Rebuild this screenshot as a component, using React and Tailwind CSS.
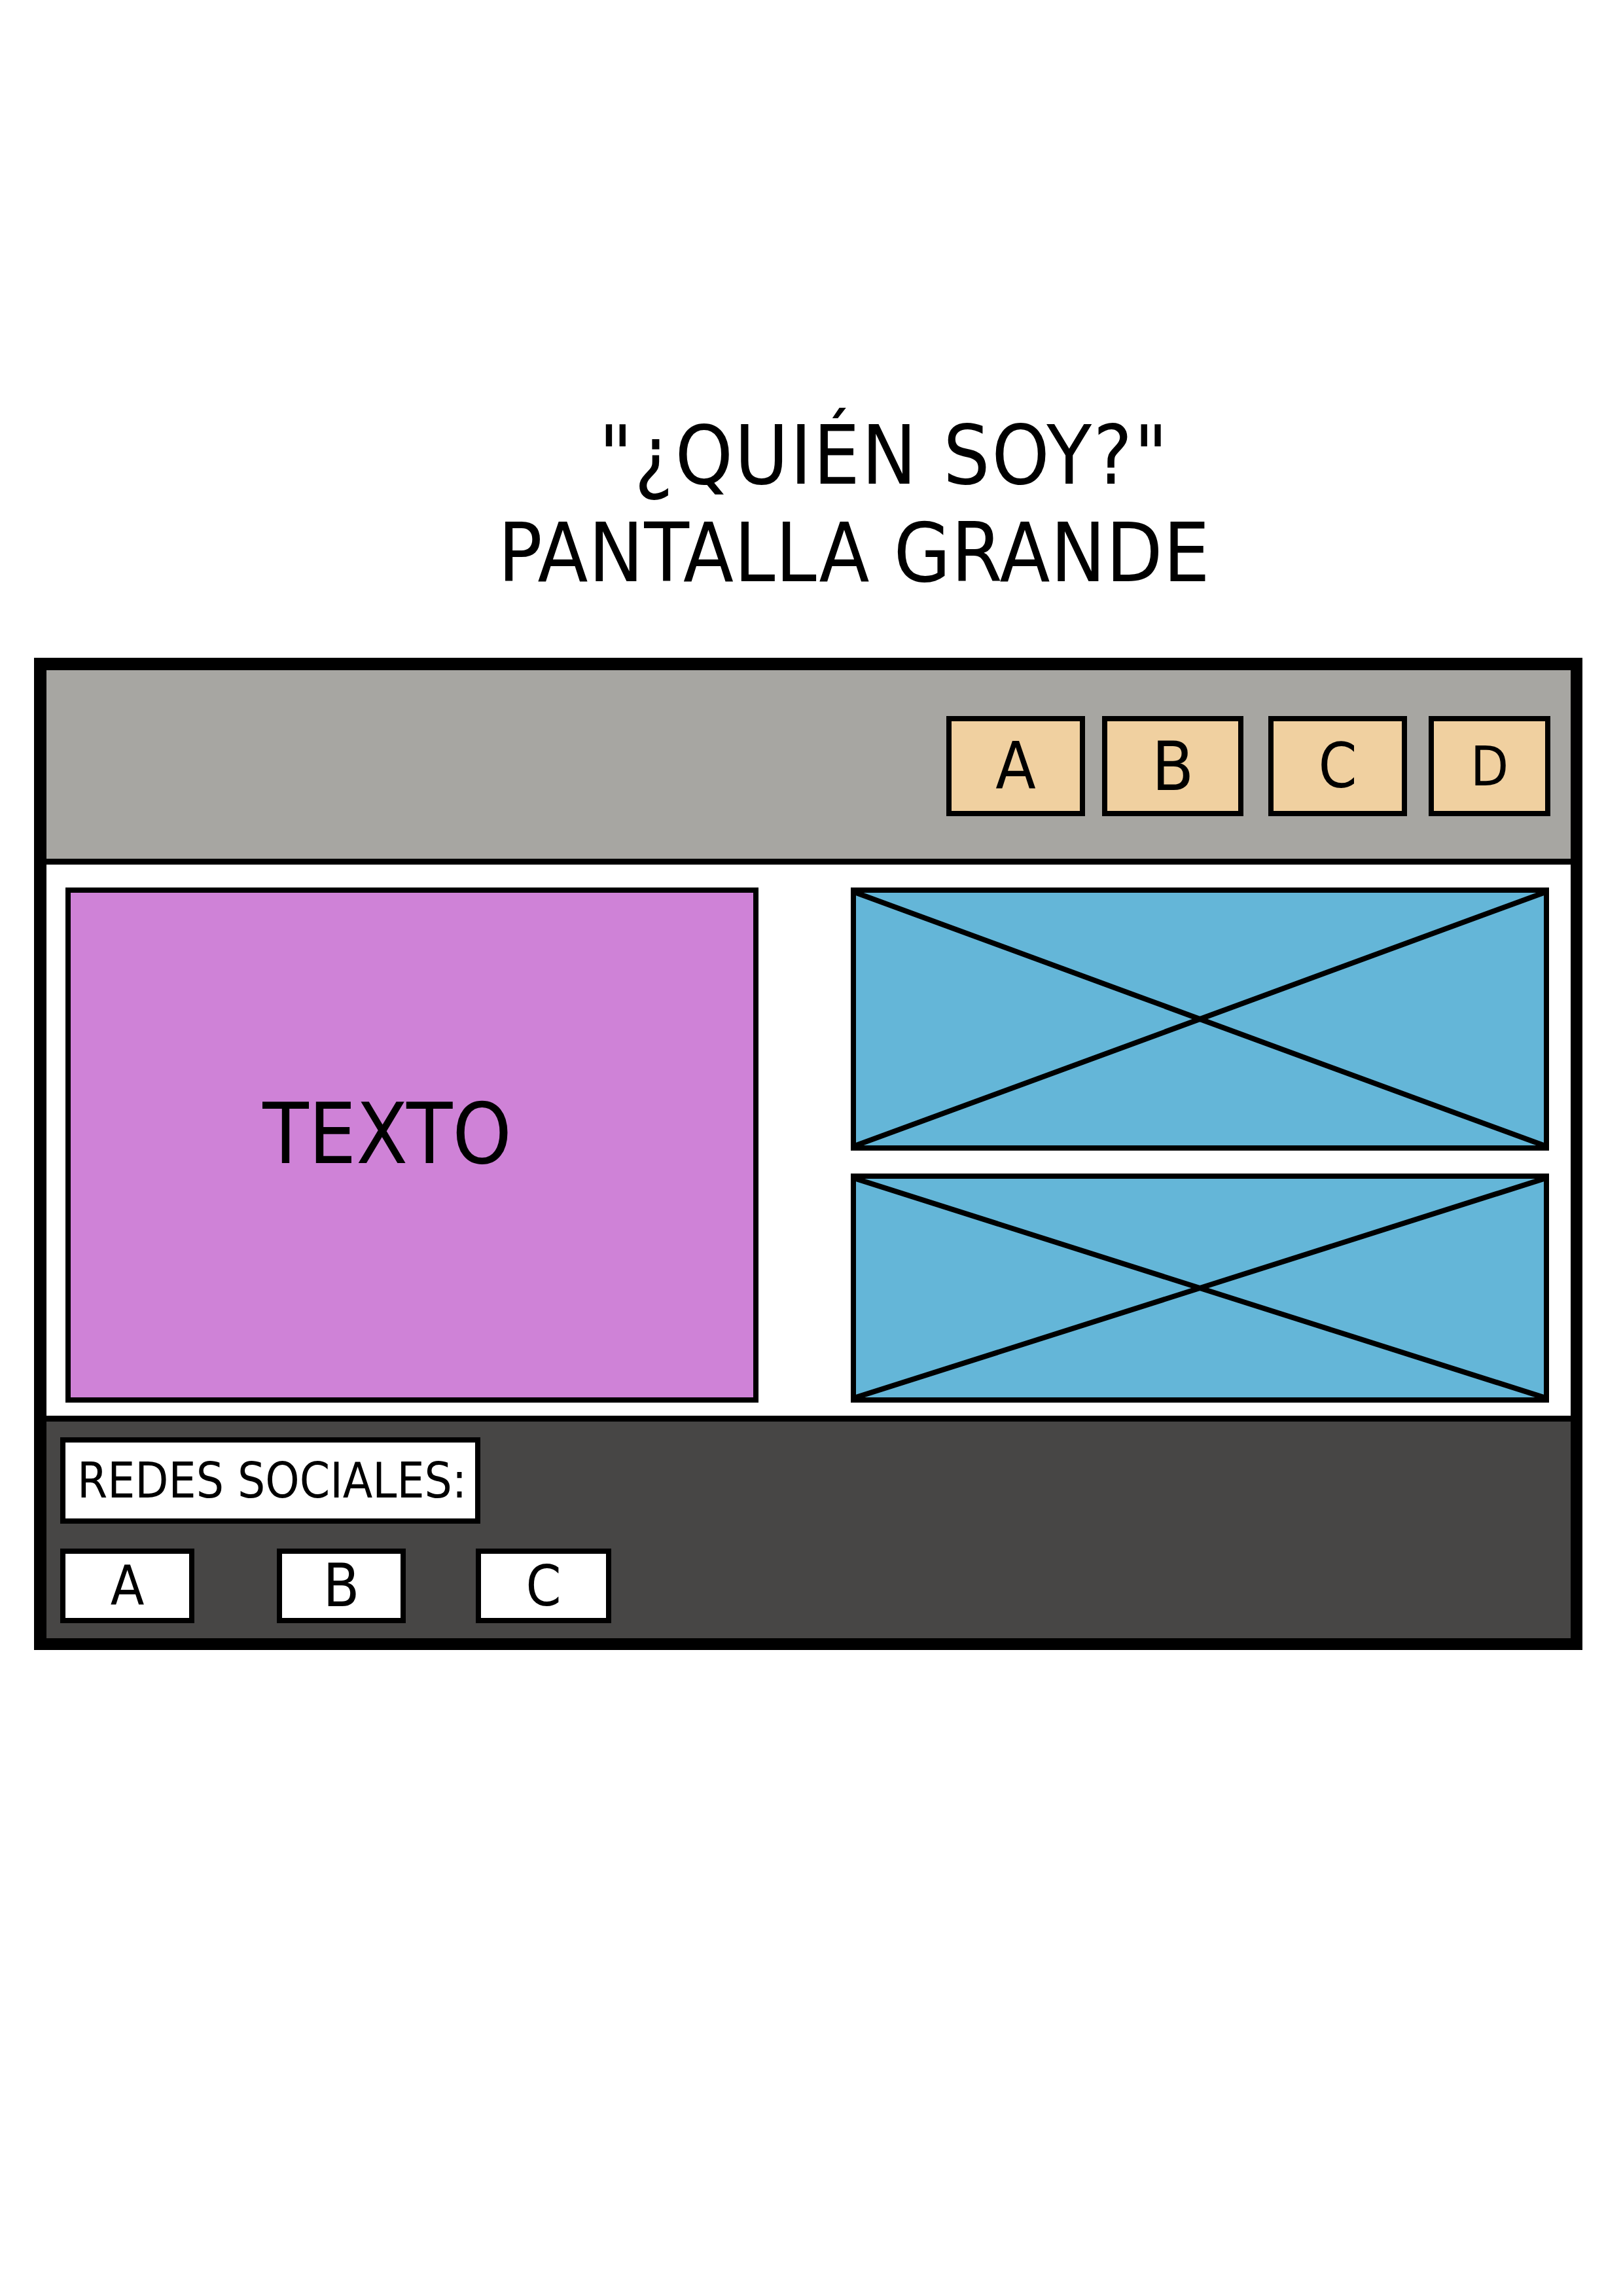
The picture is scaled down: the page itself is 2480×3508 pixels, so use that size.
import React from 'react';

const navItems = [
  { label: 'A', size: 'text-[100px]', width: 'w-[212px]', gap: 'mr-[26px]' },
  { label: 'B', size: 'text-[104px]', width: 'w-[216px]', gap: 'mr-[38px]' },
  { label: 'C', size: 'text-[94px]', width: 'w-[212px]', gap: 'mr-[33px]' },
  { label: 'D', size: 'text-[84px]', width: 'w-[186px]', gap: '' },
];

const socials = [
  { label: 'A', size: 'text-[84px]', width: 'w-[205px]', gap: 'mr-[126px]' },
  { label: 'B', size: 'text-[90px]', width: 'w-[197px]', gap: 'mr-[107px]' },
  { label: 'C', size: 'text-[86px]', width: 'w-[207px]', gap: '' },
];

// placeholder de imagen: caja azul con una X
const ImageBox = ({ height }) => (
  <div className={`relative w-full ${height} border-[8px] border-black bg-[#64b6d8]`}>
    <svg className="absolute inset-0 h-full w-full" viewBox="0 0 100 100" preserveAspectRatio="none">
      <line x1="0" y1="0" x2="100" y2="100" stroke="black" strokeWidth="8" vectorEffect="non-scaling-stroke" />
      <line x1="100" y1="0" x2="0" y2="100" stroke="black" strokeWidth="8" vectorEffect="non-scaling-stroke" />
    </svg>
  </div>
);

const App = () => {
  return (
    <div className="min-h-screen w-[2480px] bg-white text-black font-['DejaVu_Sans_Condensed','DejaVu_Sans',sans-serif] font-stretch-condensed">
      <div className="pt-[621px] text-[125px] leading-[149px]">
        <p className="pl-[915px] tracking-[2.5px]">"¿QUIÉN SOY?"</p>
        <p className="pl-[761px] tracking-[0.8px]">PANTALLA GRANDE</p>
      </div>

      <div className="mt-[86px] ml-[52px] w-[2366px] border-[19px] border-b-[18px] border-r-[18px] border-black flex flex-col">
        {/* header */}
        <div className="h-[297px] bg-[#a7a6a2] border-b-[9px] border-black flex justify-end items-start pt-[70px] pr-[31px]">
          {navItems.map((item) => (
            <div
              key={item.label}
              className={`${item.width} ${item.gap} h-[153px] border-[8px] border-black bg-[#f0d0a0] flex items-center justify-center ${item.size} leading-none`}
            >
              {item.label}
            </div>
          ))}
        </div>

        {/* main */}
        <div className="h-[842px] bg-white flex pt-[35px] pb-[20px] pl-[29px] pr-[33px]">
          <div className="w-[1059px] h-[787px] border-[8px] border-black bg-[#cf82d7] flex items-center justify-center pr-[76px] pb-[34px] text-[128px] leading-none">
            TEXTO
          </div>
          <div className="ml-[141px] w-[1067px] flex flex-col gap-[35px]">
            <ImageBox height="h-[402px]" />
            <ImageBox height="h-[350px]" />
          </div>
        </div>

        {/* footer */}
        <div className="h-[340px] bg-[#474645] border-t-[9px] border-black pt-[24px] pl-[21px]">
          <div className="w-[642px] h-[132px] border-[8px] border-black bg-white flex items-center pl-[18px] text-[74px] leading-none">
            REDES SOCIALES:
          </div>
          <div className="mt-[38px] flex">
            {socials.map((item) => (
              <div
                key={item.label}
                className={`${item.width} ${item.gap} h-[114px] border-[8px] border-black bg-white flex items-center justify-center ${item.size} leading-none`}
              >
                {item.label}
              </div>
            ))}
          </div>
        </div>
      </div>
    </div>
  );
};

export default App;
